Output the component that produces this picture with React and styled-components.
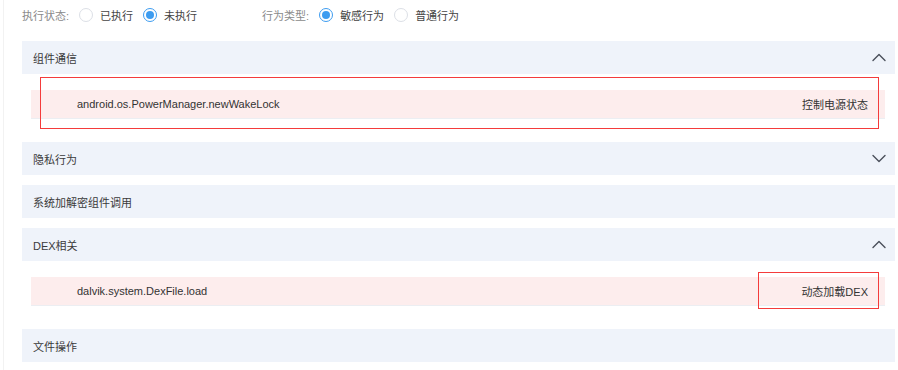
import React from "react";
import styled, { createGlobalStyle } from "styled-components";

const Global = createGlobalStyle`
  html, body { margin: 0; padding: 0; background: #fff; }
  body { font-family: "Liberation Sans", "Noto Sans CJK SC", sans-serif; font-size: 11px; color: #333; }
`;

const Page = styled.div`
  margin-left: 3px;
  border-left: 1px solid #f2f2f2;
  padding: 0 3px 8px 18px;
  min-height: 370px;
  box-sizing: border-box;
`;

const FilterBar = styled.div`
  display: flex;
  align-items: center;
  height: 30px;
  margin-bottom: 11px;
`;

const FilterGroup = styled.div`
  display: flex;
  align-items: center;
  margin-right: ${(p) => p.$gap || 0}px;
`;

const FilterLabel = styled.span`
  color: #8a8a8a;
  margin-right: 10px;
`;

const RadioItem = styled.label`
  display: flex;
  align-items: center;
  color: #444;
  margin-right: ${(p) => p.$mr || 0}px;
`;

const RadioCircle = styled.span`
  position: relative;
  width: 14px;
  height: 14px;
  box-sizing: border-box;
  border-radius: 50%;
  border: 1px solid ${(p) => (p.$checked ? "#3d9cf0" : "#dcdfe6")};
  margin-right: 7px;
  background: #fff;
  &::after {
    content: "";
    display: ${(p) => (p.$checked ? "block" : "none")};
    position: absolute;
    left: 2px;
    top: 2px;
    width: 8px;
    height: 8px;
    border-radius: 50%;
    background: #3d9cf0;
  }
`;

const Panel = styled.section`
  margin-bottom: 10px;
`;

const PanelHeader = styled.div`
  display: flex;
  align-items: center;
  justify-content: space-between;
  height: 33px;
  background: #eff3fa;
  padding: 0 9px 0 11px;
  color: #3a3a3a;
`;

const PanelBody = styled.div`
  padding: 16px 10px 13px 9px;
`;

const ApiRow = styled.div`
  position: relative;
  display: flex;
  align-items: center;
  justify-content: space-between;
  height: 28px;
  background: #fdeded;
  border-bottom: 1px solid #eceef2;
  padding: 0 17px 0 46px;
  color: #333;
`;

const Highlight = styled.div`
  position: absolute;
  border: 1px solid #f43b3b;
  pointer-events: none;
  top: ${(p) => p.$top}px;
  bottom: ${(p) => p.$bottom}px;
  right: ${(p) => p.$right}px;
  left: ${(p) => (p.$left != null ? `${p.$left}px` : "auto")};
  width: ${(p) => (p.$width ? `${p.$width}px` : "auto")};
`;

const Chevron = ({ up }) => (
  <svg width="14" height="9" viewBox="0 0 14 9" fill="none">
    <path
      d={up ? "M1 7.5 L7 1.5 L13 7.5" : "M1 1.5 L7 7.5 L13 1.5"}
      stroke="#4a4f5a"
      strokeWidth="1.4"
      strokeLinecap="round"
      strokeLinejoin="round"
    />
  </svg>
);

const Radio = ({ checked, children, mr }) => (
  <RadioItem $mr={mr}>
    <RadioCircle $checked={checked} />
    {children}
  </RadioItem>
);

export default function App() {
  return (
    <>
      <Global />
      <Page>
        <FilterBar>
          <FilterGroup $gap={65}>
            <FilterLabel>执行状态:</FilterLabel>
            <Radio mr={10}>已执行</Radio>
            <Radio checked>未执行</Radio>
          </FilterGroup>
          <FilterGroup>
            <FilterLabel>行为类型:</FilterLabel>
            <Radio checked mr={10}>敏感行为</Radio>
            <Radio>普通行为</Radio>
          </FilterGroup>
        </FilterBar>

        <Panel>
          <PanelHeader>
            组件通信
            <Chevron up />
          </PanelHeader>
          <PanelBody>
            <ApiRow>
              <span>android.os.PowerManager.newWakeLock</span>
              <span>控制电源状态</span>
              <Highlight $top={-13} $bottom={-11} $left={9} $right={6} />
            </ApiRow>
          </PanelBody>
        </Panel>

        <Panel>
          <PanelHeader>
            隐私行为
            <Chevron />
          </PanelHeader>
        </Panel>

        <Panel>
          <PanelHeader>系统加解密组件调用</PanelHeader>
        </Panel>

        <Panel>
          <PanelHeader>
            DEX相关
            <Chevron up />
          </PanelHeader>
          <PanelBody>
            <ApiRow>
              <span>dalvik.system.DexFile.load</span>
              <span>动态加载DEX</span>
              <Highlight $top={-5} $bottom={-4} $right={6} $width={119} />
            </ApiRow>
          </PanelBody>
        </Panel>

        <Panel>
          <PanelHeader>文件操作</PanelHeader>
        </Panel>
      </Page>
    </>
  );
}
